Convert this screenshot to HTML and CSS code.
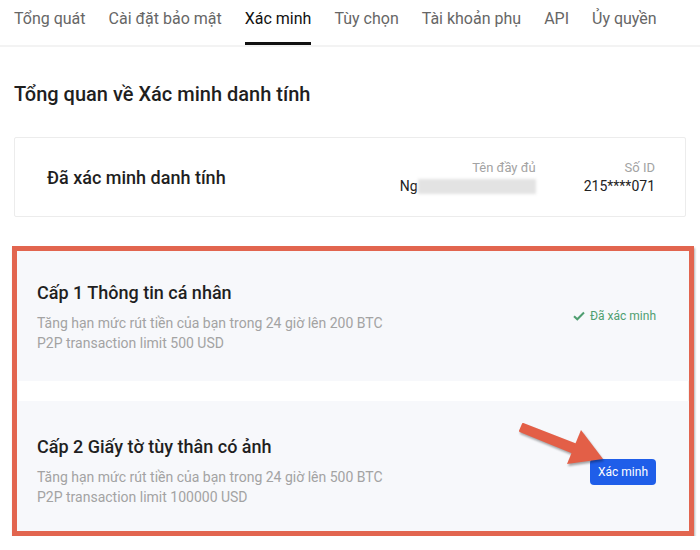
FILE: index.html
```html
<!DOCTYPE html>
<html lang="vi">
  <head>
    <meta charset="UTF-8" />
    <title>Xác minh danh tính</title>
    <link rel="stylesheet" href="styles.css">
  </head>
  <body>
    <nav class="tabs">
      <a class="tab">Tổng quát</a>
      <a class="tab">Cài đặt bảo mật</a>
      <a class="tab tab-active">Xác minh</a>
      <a class="tab">Tùy chọn</a>
      <a class="tab">Tài khoản phụ</a>
      <a class="tab">API</a>
      <a class="tab">Ủy quyền</a>
    </nav>

    <main class="content">
      <h1 class="page-title">Tổng quan về Xác minh danh tính</h1>

      <section class="summary-card">
        <div class="summary-title">Đã xác minh danh tính</div>
        <div class="summary-fields">
          <div class="field">
            <div class="field-label">Tên đầy đủ</div>
            <div class="field-value">Ng<span class="blurred"></span></div>
          </div>
          <div class="field">
            <div class="field-label">Số ID</div>
            <div class="field-value">215****071</div>
          </div>
        </div>
      </section>

      <!-- highlighted levels -->
      <section class="levels">
        <div class="level">
          <div class="level-info">
            <div class="level-title">Cấp 1 Thông tin cá nhân</div>
            <div class="level-desc">Tăng hạn mức rút tiền của bạn trong 24 giờ lên 200 BTC</div>
            <div class="level-desc">P2P transaction limit 500 USD</div>
          </div>
          <div class="level-status">
            <svg class="check" viewBox="0 0 12 10" width="12" height="10">
              <path d="M1 5.2 L4.3 8.3 L11 1.5" fill="none" stroke="currentColor" stroke-width="2" />
            </svg>
            Đã xác minh
          </div>
        </div>

        <div class="level">
          <div class="level-info">
            <div class="level-title">Cấp 2 Giấy tờ tùy thân có ảnh</div>
            <div class="level-desc">Tăng hạn mức rút tiền của bạn trong 24 giờ lên 500 BTC</div>
            <div class="level-desc">P2P transaction limit 100000 USD</div>
          </div>
          <button class="verify-btn">Xác minh</button>
          <svg class="pointer-arrow" viewBox="0 0 90 60" width="90" height="60">
            <path d="M4 7 L58 28 L55 36 L1 14 Z" fill="#e35f47" stroke="#e35f47" stroke-width="2" stroke-linejoin="round" />
            <polygon points="62,13 84,42 48,47" fill="#e35f47" />
          </svg>
        </div>
      </section>
    </main>
  </body>
</html>
```

FILE: styles.css
```css
:root {
  --color-text: #1f1f1f;
  --color-muted: #a3a3a3;
  --color-border: #ececec;
  --color-panel: #f7f8fb;
  --color-blue: #1f5ee9;
  --color-green: #4f9e70;
  --color-mark: #e2654f;
}

body {
  margin: 0;
  font-family: Roboto, "Noto Sans", sans-serif;
  color: var(--color-text);
  background: #ffffff;
}

.tabs {
  display: flex;
  gap: 23px;
  padding: 0 14px;
  height: 45px;
  border-bottom: 2px solid #f3f3f3;
}

.tab {
  padding-top: 9px;
  font-size: 16px;
  line-height: 20px;
  color: #666666;
  box-sizing: border-box;
  height: 45px;
}

.tab-active {
  color: #111111;
  border-bottom: 3px solid #111111;
}

.content {
  padding: 0 14px;
}

.page-title {
  margin: 34px 0 0;
  font-size: 20px;
  line-height: 26px;
  font-weight: 500;
}

.summary-card {
  margin-top: 30px;
  height: 80px;
  box-sizing: border-box;
  border: 1px solid var(--color-border);
  border-radius: 2px;
  display: flex;
  align-items: center;
  justify-content: space-between;
  padding: 0 30px 0 32px;
}

.summary-title {
  font-size: 18px;
  font-weight: 500;
}

.summary-fields {
  display: flex;
  gap: 48px;
  text-align: right;
}

.field-label {
  font-size: 13px;
  line-height: 19px;
  color: var(--color-muted);
}

.field-value {
  font-size: 14px;
  line-height: 19px;
  color: #222222;
}

.blurred {
  display: inline-block;
  vertical-align: -3px;
  width: 118px;
  height: 15px;
  background: #e3e3e3;
  filter: blur(1.5px);
}

.levels {
  margin: 29px -8px 0 -2px;
  border: 5px solid var(--color-mark);
  display: flex;
  flex-direction: column;
  gap: 20px;
  box-shadow: 1px 2px 2px rgba(0, 0, 0, 0.3), inset 0 1px 1px rgba(0, 0, 0, 0.5);
}

.level {
  position: relative;
  height: 130px;
  box-sizing: border-box;
  background: var(--color-panel);
  padding: 30px 33px 0 20px;
  display: flex;
  justify-content: space-between;
}

.level + .level {
  padding-top: 34px;
}

.level-title {
  font-size: 18px;
  line-height: 24px;
  font-weight: 500;
  margin-bottom: 8px;
}

.level-desc {
  font-size: 14px;
  line-height: 20px;
  color: var(--color-muted);
}

.level-status {
  align-self: center;
  margin-top: -30px;
  font-size: 12px;
  color: var(--color-green);
  display: flex;
  align-items: center;
  gap: 5px;
}

.verify-btn {
  align-self: center;
  margin-top: -22px;
  height: 26px;
  width: 66px;
  border: none;
  border-radius: 4px;
  background: var(--color-blue);
  color: #ffffff;
  font-family: inherit;
  font-size: 12px;
  cursor: pointer;
}

/* annotation arrow pointing at the button */
.pointer-arrow {
  position: absolute;
  left: 502px;
  top: 16px;
  filter: drop-shadow(1px 2px 1px rgba(0, 0, 0, 0.35));
}
```
